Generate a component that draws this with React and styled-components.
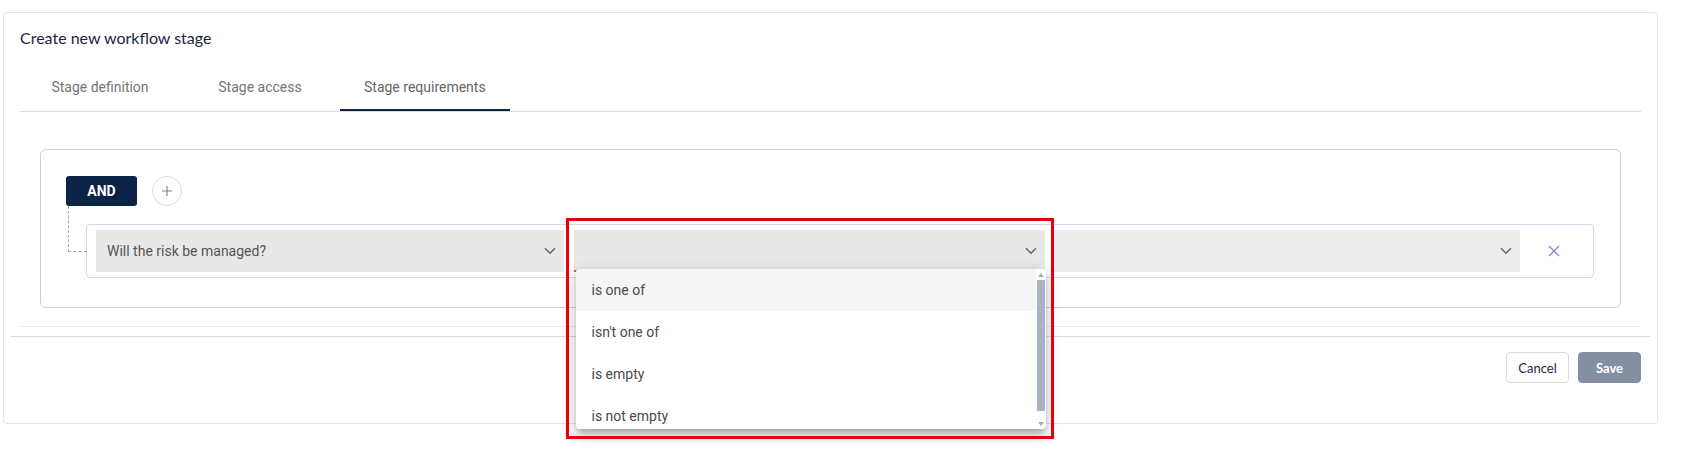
import React from "react";
import styled, { createGlobalStyle } from "styled-components";

const GlobalStyle = createGlobalStyle`
  html, body { margin: 0; padding: 0; background: #ffffff; }
  body { font-family: Roboto, "Noto Sans", Arial, sans-serif; }
  * { box-sizing: border-box; }
`;

const Page = styled.div`
  min-height: 100vh;
  padding: 12px 24px 0 3px;
`;

const Card = styled.div`
  border: 1px solid #e4e4ec;
  border-radius: 4px;
  padding: 0 7px;
  background: #fff;
`;

const Header = styled.div`
  margin: 0 9px;
`;

const Title = styled.h2`
  margin: 0;
  padding-top: 15px;
  font-family: Lato, "Liberation Sans", sans-serif;
  font-weight: 400;
  font-size: 16px;
  line-height: 19px;
  color: #1c1f3d;
`;

const Tabs = styled.div`
  display: flex;
  margin-top: 16px;
  border-bottom: 1px solid #dcdcdc;
`;

const Tab = styled.div`
  position: relative;
  min-width: 160px;
  height: 48px;
  padding: 0 24px;
  display: flex;
  align-items: center;
  justify-content: center;
  font-size: 14px;
  color: ${(p) => (p.$active ? "#666" : "#757575")};
  &::after {
    content: "";
    display: ${(p) => (p.$active ? "block" : "none")};
    position: absolute;
    left: 0;
    right: 0;
    bottom: 0;
    height: 2px;
    background: #0b2346;
  }
`;

const Content = styled.div`
  margin: 0 9px;
  padding: 37px 20px 18px;
  border-bottom: 1px solid #ededed;
`;

const ConditionBox = styled.div`
  border: 1px solid #cfcfcf;
  border-radius: 6px;
  padding: 26px 26px 29px 25px;
`;

const GroupHeader = styled.div`
  display: flex;
  align-items: center;
  gap: 15px;
`;

const AndButton = styled.button`
  width: 71px;
  height: 30px;
  border: none;
  border-radius: 3px;
  background: #0b2346;
  color: #fff;
  font-family: Roboto, sans-serif;
  font-weight: 700;
  font-size: 14px;
  padding: 0;
`;

const AddButton = styled.button`
  width: 30px;
  height: 30px;
  border: 1px solid #dcdcdc;
  border-radius: 50%;
  background: #fff;
  display: flex;
  align-items: center;
  justify-content: center;
  padding: 0;
`;

const Row = styled.div`
  position: relative;
  margin: 18px 0 0 20px;
  border: 1px solid #d8d4ee;
  border-radius: 4px;
  padding: 5px 0 5px 9px;
  display: flex;
  &::before {
    content: "";
    position: absolute;
    left: -19px;
    top: -19px;
    width: 18px;
    height: 45px;
    border-left: 1px dashed #aaa;
    border-bottom: 1px dashed #aaa;
  }
`;

const Selects = styled.div`
  flex: 1;
  display: grid;
  grid-template-columns: 468px 471px 466px;
  column-gap: 9.5px;
`;

const Select = styled.div`
  position: relative;
  height: 42px;
  background: ${(p) => (p.$muted ? "#ededed" : "#e8e8e8")};
  display: flex;
  align-items: center;
  justify-content: space-between;
  padding: 0 8px 0 11px;
  font-size: 14px;
  color: #555;
  box-shadow: ${(p) => (p.$invalid ? "inset 0 -2px 0 #ef5a28" : "none")};
`;

const SelectText = styled.span`
  white-space: nowrap;
`;

const ChevronIcon = styled.svg`
  margin-left: auto;
  flex: none;
`;

const Chevron = ({ color = "#666" }) => (
  <ChevronIcon width="12" height="8" viewBox="0 0 12 8">
    <path d="M1 1.2 L6 6.2 L11 1.2" fill="none" stroke={color} strokeWidth="1.6" />
  </ChevronIcon>
);

const RemoveCell = styled.div`
  width: 74px;
  display: flex;
  align-items: center;
  justify-content: center;
  padding-right: 6px;
`;

const Highlight = styled.div`
  position: absolute;
  left: -8px;
  top: -12px;
  width: 488px;
  height: 221px;
  border: 3px solid #e6000c;
  pointer-events: none;
  z-index: 3;
`;

const Menu = styled.div`
  position: absolute;
  top: 39px;
  left: 2px;
  right: -1px;
  height: 160px;
  background: #fff;
  border-radius: 4px;
  box-shadow: 0 5px 5px -3px rgba(0, 0, 0, 0.2), 0 8px 10px 1px rgba(0, 0, 0, 0.14),
    0 3px 14px 2px rgba(0, 0, 0, 0.12);
  display: flex;
  overflow: hidden;
  z-index: 2;
`;

const MenuList = styled.ul`
  flex: 1;
  margin: 0;
  padding: 0;
  list-style: none;
  overflow: hidden;
`;

const MenuItem = styled.li`
  height: 42px;
  display: flex;
  align-items: center;
  padding-left: 16px;
  font-size: 14px;
  color: #4a4a4a;
  background: ${(p) => (p.$active ? "#f5f5f5" : "#fff")};
`;

const ScrollBar = styled.div`
  width: 10px;
  display: flex;
  flex-direction: column;
  align-items: center;
  padding: 0 1px;
`;

const ArrowBox = styled.div`
  height: 11px;
  width: 100%;
  display: flex;
  align-items: center;
  justify-content: center;
`;

const Triangle = styled.div`
  width: 0;
  height: 0;
  border-left: 3.5px solid transparent;
  border-right: 3.5px solid transparent;
  ${(p) => (p.$down ? "border-top: 4px solid #a3abbd;" : "border-bottom: 4px solid #a3abbd;")}
`;

const Thumb = styled.div`
  width: 8px;
  height: 131px;
  background: #a9b2c6;
`;

const Track = styled.div`
  flex: 1;
`;

const Footer = styled.div`
  margin-top: 9px;
  border-top: 1px solid #dadada;
  padding: 15px 9px 40px;
  display: flex;
  justify-content: flex-end;
  gap: 9px;
`;

const Button = styled.button`
  width: 63px;
  height: 31px;
  border-radius: 4px;
  font-family: Lato, "Liberation Sans", sans-serif;
  font-size: 13px;
  padding: 0;
  border: 1px solid ${(p) => (p.$primary ? "#848fa4" : "#d9d9e1")};
  background: ${(p) => (p.$primary ? "#848fa4" : "#fff")};
  color: ${(p) => (p.$primary ? "#fff" : "#1f2547")};
  font-weight: ${(p) => (p.$primary ? 700 : 400)};
`;

const options = ["is one of", "isn't one of", "is empty", "is not empty"];

export default function App() {
  return (
    <>
      <GlobalStyle />
      <Page>
        <Card>
          <Header>
            <Title>Create new workflow stage</Title>
            <Tabs>
              <Tab>Stage definition</Tab>
              <Tab>Stage access</Tab>
              <Tab $active>Stage requirements</Tab>
            </Tabs>
          </Header>
          <Content>
            <ConditionBox>
              <GroupHeader>
                <AndButton>AND</AndButton>
                <AddButton aria-label="add">
                  <svg width="12" height="12" viewBox="0 0 12 12">
                    <path d="M6 1 V11 M1 6 H11" stroke="#7a7f95" strokeWidth="1.1" />
                  </svg>
                </AddButton>
              </GroupHeader>
              <Row>
                <Selects>
                  <Select>
                    <SelectText>Will the risk be managed?</SelectText>
                    <Chevron />
                  </Select>
                  <Select $invalid>
                    <Chevron />
                    <Highlight />
                    <Menu>
                      <MenuList>
                        {options.map((o, i) => (
                          <MenuItem key={o} $active={i === 0}>
                            {o}
                          </MenuItem>
                        ))}
                      </MenuList>
                      <ScrollBar>
                        <ArrowBox>
                          <Triangle />
                        </ArrowBox>
                        <Thumb />
                        <Track />
                        <ArrowBox>
                          <Triangle $down />
                        </ArrowBox>
                      </ScrollBar>
                    </Menu>
                  </Select>
                  <Select $muted>
                    <Chevron color="#6a6a6a" />
                  </Select>
                </Selects>
                <RemoveCell>
                  <svg width="12" height="12" viewBox="0 0 12 12">
                    <path d="M1 1 L11 11 M11 1 L1 11" stroke="#8683cf" strokeWidth="1.3" />
                  </svg>
                </RemoveCell>
              </Row>
            </ConditionBox>
          </Content>
          <Footer>
            <Button>Cancel</Button>
            <Button $primary>Save</Button>
          </Footer>
        </Card>
      </Page>
    </>
  );
}
